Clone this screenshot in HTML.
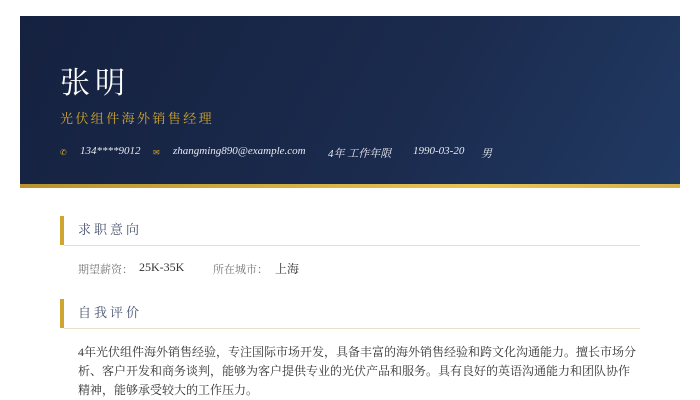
<!DOCTYPE html>
<html><head><meta charset="utf-8"><style>
body{margin:0;width:700px;height:400px;background:#fff;overflow:hidden;font-family:"Liberation Serif","Noto Serif CJK SC",serif;}
.hd{position:absolute;left:20px;top:16px;width:660px;height:168px;background:linear-gradient(120deg,#15213f 0%,#1b2b4e 60%,#213a63 100%);}
.gb{position:absolute;left:20px;top:184px;width:660px;height:4px;background:linear-gradient(90deg,#b8922c,#e8c553 70%,#d4b14a);}
.name{position:absolute;left:60px;top:58px;color:#fff;font-size:30px;letter-spacing:5px;}
.title{position:absolute;left:60px;top:108px;color:#d0a630;font-size:13px;letter-spacing:2.4px;}
.ct{position:absolute;top:145px;color:#e6e9f0;font-size:11px;font-style:italic;white-space:nowrap;}
.ic{position:absolute;top:148px;color:#d0a630;font-size:8px;}
.bar{position:absolute;left:60px;width:4px;background:#d0a630;}
.st{position:absolute;left:78px;font-size:13px;color:#4a5470;letter-spacing:3px;}
.ln{position:absolute;left:64px;width:576px;height:1px;background:#e8e0cc;}
.lb{position:absolute;top:261px;font-size:11px;color:#777;}
.vl{position:absolute;top:260px;font-size:12px;color:#333;}
.p{position:absolute;left:78px;top:343px;width:620px;font-size:12px;line-height:19px;color:#333;white-space:nowrap;}
</style></head><body>
<div class="hd"></div><div class="gb"></div>
<div class="name">张明</div>
<div class="title">光伏组件海外销售经理</div>
<div class="ic" style="left:60px">✆</div>
<div class="ct" style="left:80px">134****9012</div>
<div class="ic" style="left:153px">✉</div>
<div class="ct" style="left:173px">zhangming890@example.com</div>
<div class="ct" style="left:328px">4年 工作年限</div>
<div class="ct" style="left:413px">1990-03-20</div>
<div class="ct" style="left:481px">男</div>
<div class="bar" style="top:216px;height:29px"></div>
<div class="st" style="top:219px">求职意向</div>
<div class="ln" style="top:245px"></div>
<div class="lb" style="left:78px">期望薪资：</div>
<div class="vl" style="left:139px">25K-35K</div>
<div class="lb" style="left:213px">所在城市：</div>
<div class="vl" style="left:275px">上海</div>
<div class="bar" style="top:299px;height:29px"></div>
<div class="st" style="top:302px">自我评价</div>
<div class="ln" style="top:328px"></div>
<div class="p">4年光伏组件海外销售经验，专注国际市场开发，具备丰富的海外销售经验和跨文化沟通能力。擅长市场分<br>析、客户开发和商务谈判，能够为客户提供专业的光伏产品和服务。具有良好的英语沟通能力和团队协作<br>精神，能够承受较大的工作压力。</div>
</body></html>
